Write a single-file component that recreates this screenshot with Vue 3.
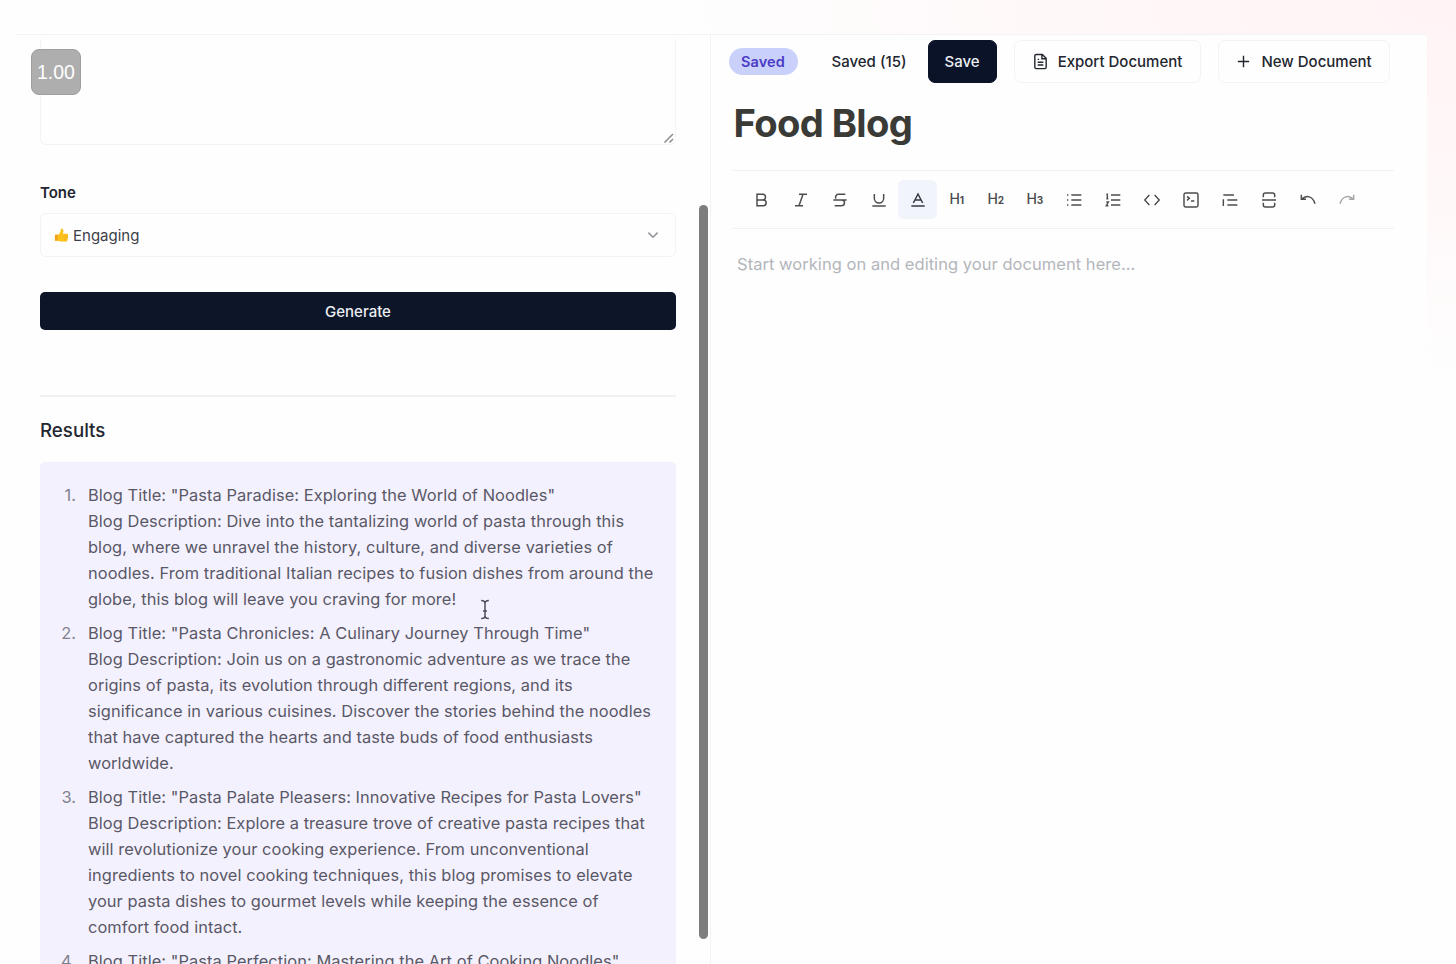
<template>
  <div class="page">
    <header class="topbar"></header>

    <main class="panel">
      <section class="left">
        <div class="form">
          <div class="textarea">
            <svg class="grip" viewBox="0 0 12 12"><path d="M1.500 10.500L10 2M6.500 10.500L10 7" /></svg>
          </div>

          <label class="label">Tone</label>
          <div class="select">
            <svg class="thumb" viewBox="0 0 16 16">
              <path fill="#fcc21b" d="M1 7.200h3.600C6 6 7 4.300 7.200 1.600 7.400.3 9.500.5 9.900 2.200c.3 1.400 0 2.800-.5 4h4.400c1.500 0 1.700 1.700.8 2.200.9.600.7 1.800-.1 2.200.6.700.3 1.700-.4 2 .4 1-.2 1.900-1.300 1.900H7.600c-1.200 0-2.200-.6-3-1H1z" />
              <path fill="#f2a51c" d="M1 7.200h3.200v6.300H1zM10.200 8.300h4.200v.5h-4.200zm0 2.100h4v.5h-4zm0 2h3.800v.5h-3.800z" />
            </svg>
            <span class="select-text">Engaging</span>
            <svg class="chevron" viewBox="0 0 12 12"><path d="M1.400 3.600L6 8.200l4.600-4.600" /></svg>
          </div>

          <button class="generate">Generate</button>

          <div class="divider"></div>
          <h2 class="results-title">Results</h2>

          <div class="results">
            <div v-for="(item, i) in results" :key="i" class="result">
              <span class="num">{{ i + 1 }}.</span>
              <div class="lines">
                <div v-for="line in item" :key="line" class="line">{{ line }}</div>
              </div>
            </div>
          </div>
        </div>

        <div class="track"><div class="bar"></div></div>
      </section>

      <section class="right">
        <div class="actions">
          <span class="pill">Saved</span>
          <span class="saved-count">Saved (15)</span>
          <button class="btn btn-dark">Save</button>
          <button class="btn btn-export">
            <svg viewBox="0 0 24 24"><path d="M14.500 2H6a2 2 0 0 0-2 2v16a2 2 0 0 0 2 2h12a2 2 0 0 0 2-2V7.500zM14 2v6h6M8 13h8M8 17h8M8 9h2" /></svg>
            <span>Export Document</span>
          </button>
          <button class="btn btn-new">
            <svg viewBox="0 0 24 24"><path d="M12 4v16M4 12h16" /></svg>
            <span>New Document</span>
          </button>
        </div>

        <h1 class="title">Food Blog</h1>

        <div class="toolbar">
          <button v-for="tool in tools" :key="tool.name" :class="['tool', tool.state]" :title="tool.name">
            <span v-if="tool.level" class="heading">H<small>{{ tool.level }}</small></span>
            <svg v-else viewBox="0 0 24 24"><path :d="tool.path" /></svg>
          </button>
        </div>

        <p class="placeholder">Start working on and editing your document here...</p>
      </section>
    </main>

    <div class="zoom">1.00</div>
    <svg class="caret" viewBox="0 0 12 22"><path d="M2 1.500q4 0 4 3v13q0 3-4 3M10 1.500q-4 0-4 3M6 17.500q0 3 4 3M4 12.500h4" /></svg>
  </div>
</template>

<script setup>
const results = [
  [
    'Blog Title: "Pasta Paradise: Exploring the World of Noodles"',
    'Blog Description: Dive into the tantalizing world of pasta through this',
    'blog, where we unravel the history, culture, and diverse varieties of',
    'noodles. From traditional Italian recipes to fusion dishes from around the',
    'globe, this blog will leave you craving for more!'
  ],
  [
    'Blog Title: "Pasta Chronicles: A Culinary Journey Through Time"',
    'Blog Description: Join us on a gastronomic adventure as we trace the',
    'origins of pasta, its evolution through different regions, and its',
    'significance in various cuisines. Discover the stories behind the noodles',
    'that have captured the hearts and taste buds of food enthusiasts',
    'worldwide.'
  ],
  [
    'Blog Title: "Pasta Palate Pleasers: Innovative Recipes for Pasta Lovers"',
    'Blog Description: Explore a treasure trove of creative pasta recipes that',
    'will revolutionize your cooking experience. From unconventional',
    'ingredients to novel cooking techniques, this blog promises to elevate',
    'your pasta dishes to gourmet levels while keeping the essence of',
    'comfort food intact.'
  ],
  ['Blog Title: "Pasta Perfection: Mastering the Art of Cooking Noodles"']
]

const tools = [
  { name: 'Bold', path: 'M4.500 3.500h8.500a4.200 4.200 0 0 1 0 8.500H4.500zM4.500 12H14a4.300 4.300 0 0 1 0 8.600H4.500z' },
  { name: 'Italic', path: 'M9 3.500h12M3 20.500h12M15 3.500L9 20.500' },
  { name: 'Strike', path: 'M20 3.500H9.500a4.200 4.200 0 0 0-3.500 6.500M2 12h20M14.500 12a4.250 4.250 0 0 1 0 8.500H4' },
  { name: 'Underline', path: 'M5 3v6.500a7 7 0 0 0 14 0V3M2 21h20' },
  { name: 'Color', state: 'active', path: 'M5 16.500L12 3l7 13.500M7.500 12h9M2 21h20' },
  { name: 'Heading 1', level: 1 },
  { name: 'Heading 2', level: 2 },
  { name: 'Heading 3', level: 3 },
  { name: 'Bullet list', path: 'M8 4.500h15M8 12h15M8 19.500h15M1.500 4.500h2M1.500 12h2M1.500 19.500h2' },
  { name: 'Ordered list', path: 'M9 4.500h14M9 12h14M9 19.500h14M2 3.500h1.500v6.500M2 10h3M2 15h3l-3 5.500h3' },
  { name: 'Code', path: 'M8 4.500L1 12l7 7.500M16 4.500l7 7.500-7 7.500' },
  { name: 'Code block', path: 'M4 1.500h16a2.500 2.500 0 0 1 2.500 2.500v16a2.500 2.500 0 0 1-2.500 2.500H4A2.500 2.500 0 0 1 1.500 20V4A2.500 2.500 0 0 1 4 1.500zM6 6.500l3.500 3L6 12.500M12 13.500h5' },
  { name: 'Quote', path: 'M2 4.500h16M8 12h15M8 19.500h15M2 11v10' },
  { name: 'Page break', path: 'M3.500 8V4.500A3 3 0 0 1 6.500 1.500h11a3 3 0 0 1 3 3V8M3.500 16v3.500a3 3 0 0 0 3 3h11a3 3 0 0 0 3-3V16M1.500 12h21' },
  { name: 'Undo', path: 'M2 4v7h7M2 11C10 4 19 6 22.500 17.500' },
  { name: 'Redo', state: 'muted', path: 'M22 4v7h-7M22 11C14 4 5 6 1.500 17.500' }
]
</script>

<style>
body { overflow:hidden; background:#fefefe }
</style>

<style scoped>
* { box-sizing:border-box }
.page { position:relative; width:1456px; height:964px; overflow:hidden; font-family:Inter, "Liberation Sans", sans-serif; color:#23262f;
  background:radial-gradient(ellipse 780px 380px at 1456px 0, #fff3f5 0, #fff7f8 45%, #fefefe 100%) }
.topbar { height:35px; margin:0 29px 0 15px; border-bottom:1px solid #f3f2f5 }
.panel { display:flex; margin:0 29px 0 10px; height:929px; background:#fefefe }
button { font-family:inherit; padding:0 }

.left { display:flex; justify-content:space-between; width:701px; padding:4px 2px 0 30px; border-right:1px solid #f2f2f5 }
.form { width:636px; flex:none }
.textarea { display:flex; align-items:flex-end; justify-content:flex-end; height:106px; border:1px solid #f2f3f7; border-top:none; border-radius:0 0 6px 6px }
.grip { width:12px; height:12px; fill:none; stroke:#8b8b8b; stroke-width:1.500 }
.label { display:block; margin-top:36px; height:24px; line-height:24px; font-size:15px; font-weight:600 }
.select { display:flex; align-items:center; margin-top:8px; height:44px; padding:0 16px 0 13px; border:1px solid #f2f3f7; border-radius:6px }
.thumb { width:15px; height:15px; margin-right:4px }
.select-text { flex:1; font-size:15px; color:#3c3f49 }
.chevron { width:12px; height:12px; fill:none; stroke:#939398; stroke-width:1.500 }
.generate { display:block; width:636px; height:38px; margin-top:35px; border:none; border-radius:5px; background:#0d1629; color:#eceef3; font-size:15px; font-weight:500 }
.divider { margin-top:65px; height:2px; background:#f1f1f5 }
.results-title { margin:20px 0 0; height:28px; line-height:28px; font-size:18.700px; font-weight:500 }
.results { margin-top:17px; padding:20px 20px 0 21px; height:520px; background:#f4f1fe; border-radius:5px }
.result { display:flex; margin-bottom:7.500px; line-height:26.080px; font-size:16.400px; letter-spacing:.07px; color:#595866 }
.num { width:15px; margin-right:12px; flex:none; display:flex; justify-content:flex-end; color:#83818f }
.line { white-space:nowrap }
.track { width:9px; padding-top:166px }
.bar { width:9px; height:734px; border-radius:5px; background:#7d7d7d }

.right { width:716px; padding:4px 33px 0 18px }
.actions { display:flex; align-items:center; height:44px; font-size:15px; font-weight:500; white-space:nowrap }
.pill { width:69px; height:27px; line-height:27px; border-radius:14px; text-align:center; background:#c9d1fb; color:#4a3bc6; font-weight:600; font-size:14.500px; letter-spacing:.1px; margin-left:-.5px }
.saved-count { width:76px; margin:0 20px 0 34px }
.btn { display:flex; align-items:center; justify-content:center; height:43px; border:1px solid #f2f3f7; border-radius:7px; background:#fefefe; color:#23262f; font-size:15px; font-weight:500 }
.btn svg { width:17px; height:17px; margin-right:9px; fill:none; stroke:currentColor; stroke-width:2 }
.btn-dark { width:69px; background:#0b1329; border-color:#0b1329; color:#eceef3 }
.btn-export { width:187px; margin-left:17px }
.btn-new { width:172px; margin-left:17px }
.title { margin:16px 0 0 4.500px; height:48px; line-height:48px; font-size:38.200px; letter-spacing:-.62px; font-weight:700; color:#3a3a37 }
.toolbar { display:flex; align-items:center; margin:23px 0 0 4px; width:661px; height:59px; padding-left:9px; border-top:1px solid #f1f1f4; border-bottom:1px solid #f1f1f4 }
.tool { display:flex; align-items:center; justify-content:center; width:39.050px; height:39px; border:none; border-radius:6px; background:none; color:#4c4c4f; flex:none }
.tool svg { width:16px; height:16px; fill:none; stroke:currentColor; stroke-width:2.200 }
.tool.active { background:#f1f4fa; color:#353844 }
.tool.muted { color:#a6a6a8 }
.heading { font-size:14px; line-height:16px; font-weight:500 }
.heading small { font-size:10px; font-weight:700 }
.placeholder { margin:21px 0 0 8px; height:28px; line-height:28px; font-size:16.500px; letter-spacing:.04px; color:#b3b6bb; white-space:nowrap }

.zoom { position:absolute; left:31px; top:49px; width:50px; height:46px; line-height:45px; border:1px solid #9f9f9f; border-radius:8px; background:#aeaeae; color:#fff; text-align:center; font-family:"Liberation Sans", sans-serif; font-size:19.500px }
.caret { position:absolute; left:478.500px; top:599px; width:12px; height:21px; fill:none; stroke:#4b4954; stroke-width:1.500 }
</style>
